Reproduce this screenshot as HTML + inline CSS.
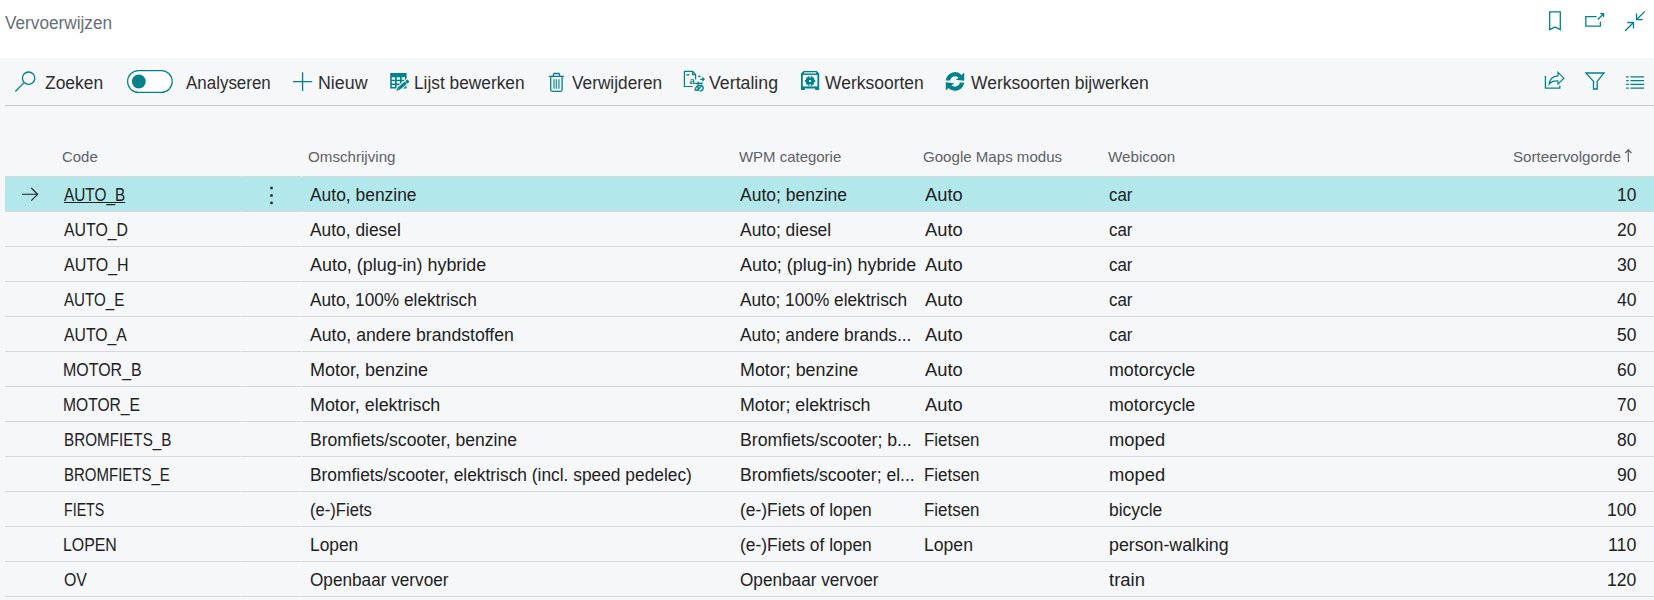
<!DOCTYPE html>
<html lang="nl">
<head>
<meta charset="utf-8">
<title>Vervoerwijzen</title>
<style>
html,body{margin:0;padding:0;}
body{width:1654px;height:600px;overflow:hidden;background:#fff;font-family:"Liberation Sans",sans-serif;color:#212121;position:relative;}
#gray{position:absolute;left:0;top:58px;width:1654px;height:542px;background:#f6f7f9;}
#tbline{position:absolute;left:5px;top:105px;width:1649px;height:1px;background:#c8c9cb;}
.t{position:absolute;white-space:nowrap;transform-origin:0 0;display:block;}
.title{font-size:17.5px;line-height:24px;color:#656e7b;}
.tb{font-size:17.5px;line-height:24px;color:#2e2e2e;}
.hd{font-size:15px;line-height:20px;color:#5e6167;}
.c{font-size:17.5px;line-height:24px;color:#212121;}
.rl{position:absolute;left:5px;width:1649px;height:1px;background:#d6d7d9;}
.rl i{position:absolute;top:0;width:1px;height:1px;background:#eceef0;}
#sel{position:absolute;left:5px;top:177px;width:1649px;height:34px;background:#b2e8eb;}
svg{position:absolute;overflow:visible;}
</style>
</head>
<body>
<div id="gray"></div>
<div id="tbline"></div>
<div id="sel"></div>
<div class="rl" style="top:176px"><i style="left:236px"></i><i style="left:296px"></i></div>
<div class="rl" style="top:211px"><i style="left:236px"></i><i style="left:296px"></i></div>
<div class="rl" style="top:246px"><i style="left:236px"></i><i style="left:296px"></i></div>
<div class="rl" style="top:281px"><i style="left:236px"></i><i style="left:296px"></i></div>
<div class="rl" style="top:316px"><i style="left:236px"></i><i style="left:296px"></i></div>
<div class="rl" style="top:351px"><i style="left:236px"></i><i style="left:296px"></i></div>
<div class="rl" style="top:386px"><i style="left:236px"></i><i style="left:296px"></i></div>
<div class="rl" style="top:421px"><i style="left:236px"></i><i style="left:296px"></i></div>
<div class="rl" style="top:456px"><i style="left:236px"></i><i style="left:296px"></i></div>
<div class="rl" style="top:491px"><i style="left:236px"></i><i style="left:296px"></i></div>
<div class="rl" style="top:526px"><i style="left:236px"></i><i style="left:296px"></i></div>
<div class="rl" style="top:561px"><i style="left:236px"></i><i style="left:296px"></i></div>
<div class="rl" style="top:596px"><i style="left:236px"></i><i style="left:296px"></i></div>
<div class="t title" id="t0" style="left:5.21px;top:11px;transform:scaleX(0.9825);">Vervoerwijzen</div>
<div class="t tb" id="t1" style="left:44.94px;top:71px;transform:scaleX(0.9956);">Zoeken</div>
<div class="t tb" id="t2" style="left:185.63px;top:71px;transform:scaleX(0.9684);">Analyseren</div>
<div class="t tb" id="t3" style="left:318.18px;top:71px;transform:scaleX(1.0178);">Nieuw</div>
<div class="t tb" id="t4" style="left:413.91px;top:71px;transform:scaleX(0.9883);">Lijst bewerken</div>
<div class="t tb" id="t5" style="left:571.78px;top:71px;transform:scaleX(0.9863);">Verwijderen</div>
<div class="t tb" id="t6" style="left:709.03px;top:71px;transform:scaleX(1.0138);">Vertaling</div>
<div class="t tb" id="t7" style="left:825.06px;top:71px;transform:scaleX(0.9993);">Werksoorten</div>
<div class="t tb" id="t8" style="left:971.00px;top:71px;">Werksoorten bijwerken</div>
<div class="t hd" id="t9" style="left:61.86px;top:147px;transform:scaleX(0.9960);">Code</div>
<div class="t hd" id="t10" style="left:308.07px;top:147px;transform:scaleX(1.0093);">Omschrijving</div>
<div class="t hd" id="t11" style="left:739.12px;top:147px;transform:scaleX(0.9967);">WPM categorie</div>
<div class="t hd" id="t12" style="left:922.77px;top:147px;transform:scaleX(1.0051);">Google Maps modus</div>
<div class="t hd" id="t13" style="left:1108.06px;top:147px;transform:scaleX(1.0121);">Webicoon</div>
<div class="t hd" id="t14" style="left:1513.16px;top:147px;transform:scaleX(1.0106);">Sorteervolgorde</div>
<div class="t c" id="t15" style="left:63.92px;top:183px;transform:scaleX(0.8781);text-decoration:underline;">AUTO_B</div>
<div class="t c" id="t16" style="left:310.09px;top:183px;transform:scaleX(0.9954);">Auto, benzine</div>
<div class="t c" id="t17" style="left:740.00px;top:183px;">Auto; benzine</div>
<div class="t c" id="t18" style="left:924.64px;top:183px;transform:scaleX(1.0457);">Auto</div>
<div class="t c" id="t19" style="left:1108.51px;top:183px;transform:scaleX(0.9659);">car</div>
<div class="t c" id="t20" style="left:1617.42px;top:183px;transform:scaleX(0.9919);">10</div>
<div class="t c" id="t21" style="left:63.89px;top:218px;transform:scaleX(0.9049);">AUTO_D</div>
<div class="t c" id="t22" style="left:310.09px;top:218px;transform:scaleX(0.9930);">Auto, diesel</div>
<div class="t c" id="t23" style="left:740.09px;top:218px;transform:scaleX(0.9974);">Auto; diesel</div>
<div class="t c" id="t24" style="left:924.61px;top:218px;transform:scaleX(1.0455);">Auto</div>
<div class="t c" id="t25" style="left:1108.79px;top:218px;transform:scaleX(0.9669);">car</div>
<div class="t c" id="t26" style="left:1617.24px;top:218px;transform:scaleX(0.9937);">20</div>
<div class="t c" id="t27" style="left:63.89px;top:253px;transform:scaleX(0.9145);">AUTO_H</div>
<div class="t c" id="t28" style="left:309.94px;top:253px;transform:scaleX(1.0236);">Auto, (plug-in) hybride</div>
<div class="t c" id="t29" style="left:739.94px;top:253px;transform:scaleX(1.0236);">Auto; (plug-in) hybride</div>
<div class="t c" id="t30" style="left:924.61px;top:253px;transform:scaleX(1.0455);">Auto</div>
<div class="t c" id="t31" style="left:1108.79px;top:253px;transform:scaleX(0.9669);">car</div>
<div class="t c" id="t32" style="left:1617.11px;top:253px;transform:scaleX(1.0070);">30</div>
<div class="t c" id="t33" style="left:63.89px;top:288px;transform:scaleX(0.8652);">AUTO_E</div>
<div class="t c" id="t34" style="left:309.82px;top:288px;transform:scaleX(0.9856);">Auto, 100% elektrisch</div>
<div class="t c" id="t35" style="left:740.08px;top:288px;transform:scaleX(0.9867);">Auto; 100% elektrisch</div>
<div class="t c" id="t36" style="left:924.61px;top:288px;transform:scaleX(1.0455);">Auto</div>
<div class="t c" id="t37" style="left:1108.79px;top:288px;transform:scaleX(0.9669);">car</div>
<div class="t c" id="t38" style="left:1616.57px;top:288px;transform:scaleX(1.0032);">40</div>
<div class="t c" id="t39" style="left:63.89px;top:323px;transform:scaleX(0.9002);">AUTO_A</div>
<div class="t c" id="t40" style="left:309.80px;top:323px;transform:scaleX(1.0091);">Auto, andere brandstoffen</div>
<div class="t c" id="t41" style="left:739.95px;top:323px;transform:scaleX(0.9898);">Auto; andere brands...</div>
<div class="t c" id="t42" style="left:924.61px;top:323px;transform:scaleX(1.0455);">Auto</div>
<div class="t c" id="t43" style="left:1108.79px;top:323px;transform:scaleX(0.9669);">car</div>
<div class="t c" id="t44" style="left:1617.24px;top:323px;transform:scaleX(0.9937);">50</div>
<div class="t c" id="t45" style="left:62.92px;top:358px;transform:scaleX(0.9124);">MOTOR_B</div>
<div class="t c" id="t46" style="left:309.64px;top:358px;transform:scaleX(1.0273);">Motor, benzine</div>
<div class="t c" id="t47" style="left:739.65px;top:358px;transform:scaleX(1.0218);">Motor; benzine</div>
<div class="t c" id="t48" style="left:924.61px;top:358px;transform:scaleX(1.0455);">Auto</div>
<div class="t c" id="t49" style="left:1109.00px;top:358px;transform:scaleX(1.0200);">motorcycle</div>
<div class="t c" id="t50" style="left:1617.20px;top:358px;transform:scaleX(0.9957);">60</div>
<div class="t c" id="t51" style="left:62.97px;top:393px;transform:scaleX(0.8920);">MOTOR_E</div>
<div class="t c" id="t52" style="left:309.64px;top:393px;transform:scaleX(1.0228);">Motor, elektrisch</div>
<div class="t c" id="t53" style="left:739.98px;top:393px;transform:scaleX(1.0162);">Motor; elektrisch</div>
<div class="t c" id="t54" style="left:924.61px;top:393px;transform:scaleX(1.0455);">Auto</div>
<div class="t c" id="t55" style="left:1109.00px;top:393px;transform:scaleX(1.0200);">motorcycle</div>
<div class="t c" id="t56" style="left:1617.23px;top:393px;transform:scaleX(0.9943);">70</div>
<div class="t c" id="t57" style="left:63.93px;top:428px;transform:scaleX(0.8700);">BROMFIETS_B</div>
<div class="t c" id="t58" style="left:309.67px;top:428px;transform:scaleX(1.0038);">Bromfiets/scooter, benzine</div>
<div class="t c" id="t59" style="left:739.99px;top:428px;transform:scaleX(1.0090);">Bromfiets/scooter; b...</div>
<div class="t c" id="t60" style="left:924.08px;top:428px;transform:scaleX(0.9665);">Fietsen</div>
<div class="t c" id="t61" style="left:1108.72px;top:428px;transform:scaleX(1.0480);">moped</div>
<div class="t c" id="t62" style="left:1617.32px;top:428px;transform:scaleX(0.9947);">80</div>
<div class="t c" id="t63" style="left:63.94px;top:463px;transform:scaleX(0.8573);">BROMFIETS_E</div>
<div class="t c" id="t64" style="left:309.61px;top:463px;transform:scaleX(0.9915);">Bromfiets/scooter, elektrisch (incl. speed pedelec)</div>
<div class="t c" id="t65" style="left:739.67px;top:463px;transform:scaleX(1.0035);">Bromfiets/scooter; el...</div>
<div class="t c" id="t66" style="left:924.08px;top:463px;transform:scaleX(0.9665);">Fietsen</div>
<div class="t c" id="t67" style="left:1108.72px;top:463px;transform:scaleX(1.0480);">moped</div>
<div class="t c" id="t68" style="left:1617.10px;top:463px;transform:scaleX(1.0077);">90</div>
<div class="t c" id="t69" style="left:64.08px;top:498px;transform:scaleX(0.8123);">FIETS</div>
<div class="t c" id="t70" style="left:309.98px;top:498px;transform:scaleX(0.9497);">(e-)Fiets</div>
<div class="t c" id="t71" style="left:739.57px;top:498px;transform:scaleX(0.9963);">(e-)Fiets of lopen</div>
<div class="t c" id="t72" style="left:924.08px;top:498px;transform:scaleX(0.9665);">Fietsen</div>
<div class="t c" id="t73" style="left:1109.12px;top:498px;transform:scaleX(0.9962);">bicycle</div>
<div class="t c" id="t74" style="left:1606.90px;top:498px;transform:scaleX(1.0042);">100</div>
<div class="t c" id="t75" style="left:63.35px;top:533px;transform:scaleX(0.9074);">LOPEN</div>
<div class="t c" id="t76" style="left:309.69px;top:533px;transform:scaleX(0.9918);">Lopen</div>
<div class="t c" id="t77" style="left:739.57px;top:533px;transform:scaleX(0.9963);">(e-)Fiets of lopen</div>
<div class="t c" id="t78" style="left:924.09px;top:533px;transform:scaleX(1.0054);">Lopen</div>
<div class="t c" id="t79" style="left:1109.08px;top:533px;transform:scaleX(1.0166);">person-walking</div>
<div class="t c" id="t80" style="left:1608.06px;top:533px;transform:scaleX(1.0144);">110</div>
<div class="t c" id="t81" style="left:63.80px;top:568px;transform:scaleX(0.9083);">OV</div>
<div class="t c" id="t82" style="left:309.93px;top:568px;transform:scaleX(0.9818);">Openbaar vervoer</div>
<div class="t c" id="t83" style="left:739.93px;top:568px;transform:scaleX(0.9818);">Openbaar vervoer</div>
<div class="t c" id="t84" style="left:1109.41px;top:568px;transform:scaleX(1.0550);">train</div>
<div class="t c" id="t85" style="left:1606.90px;top:568px;transform:scaleX(1.0042);">120</div>
<svg id="icons" width="1654" height="600" viewBox="0 0 1654 600" style="left:0;top:0" fill="none" stroke="#00828b" stroke-width="1.3">
<!-- top-right icons -->
<path d="M1549.7,11.8 H1560.3 V29.6 L1555,27 L1549.7,29.6 Z"/>
<path d="M1596.6,16.7 H1585.8 V26.1 H1600.4 V21.4"/>
<path d="M1597.8,19.5 L1603.6,13.7 M1600.2,13.7 H1603.6 V17.1"/>
<path d="M1644.8,11.4 L1636.5,19.7 M1636.5,13.6 V19.7 H1642.6"/>
<path d="M1625.2,30.8 L1633.5,22.5 M1627.3,22.5 H1633.5 V28.6"/>
<!-- search -->
<circle cx="28.6" cy="78.2" r="6.2"/>
<path d="M24.2,82.6 L15.3,91.5"/>
<!-- toggle -->
<rect x="127.6" y="70.6" width="44.6" height="21.8" rx="10.9" fill="#fff" stroke-width="1.2"/>
<circle cx="138.8" cy="81.5" r="6.9" fill="#00828b" stroke="none"/>
<!-- plus -->
<path d="M293,81.6 H312.2 M302.6,72.2 V91"/>
<!-- edit list -->
<g stroke="none">
<rect x="390.2" y="73" width="16.4" height="15.5" fill="#00828b"/>
<g fill="#fff">
<rect x="391.8" y="77.3" width="3.2" height="2.4"/><rect x="396.7" y="77.3" width="3.3" height="2.4"/><rect x="401.7" y="77.3" width="3.3" height="2.4"/>
<rect x="391.8" y="81.2" width="3.2" height="2.3"/><rect x="396.7" y="81.2" width="3.3" height="2.3"/><rect x="401.7" y="81.2" width="3.3" height="2.3"/>
<rect x="391.8" y="85.1" width="3.2" height="1.9"/><rect x="396.7" y="85.1" width="3.3" height="1.9"/><rect x="401.7" y="85.1" width="3.3" height="1.9"/>
</g>
<g transform="translate(396.2,90.7) rotate(-39.6)">
<path d="M-1.2,0 L3,-2.7 H17 V2.7 H3 Z" fill="#f6f7f9"/>
<path d="M0,0 L3.3,-1.55 V1.55 Z" fill="#00828b"/>
<rect x="3.3" y="-1.55" width="9.2" height="3.1" fill="#00828b"/>
<rect x="13" y="-1.55" width="2.9" height="3.1" rx="0.6" fill="#00828b"/>
</g>
</g>
<!-- trash -->
<path d="M548.8,76.3 H563.9 M553,76.3 L554,73.5 H559 L560,76.3 M550.7,76.3 V89.8 Q550.7,91.3 552.2,91.3 H560.6 Q562.1,91.3 562.1,89.8 V76.3"/>
<path d="M554,79.2 V88.7 M556.4,79.2 V88.7 M558.9,79.2 V88.7" stroke-width="1.4" opacity="0.8"/>
<!-- translate -->
<path d="M695.6,79.4 V74.4 L692.6,71.4 H684.4 V86.5 H692.7 M692.6,71.4 V74.6 H695.6 M686.2,74.9 H689.4" stroke-width="1.2"/>
<path d="M698.1,76.4 H700.6 M700.2,79.3 H704 M702.3,77.5 L704.1,79.3 L702.3,81.1" stroke-width="1.2"/>
<text x="689.4" y="84.4" font-family="Liberation Sans, sans-serif" font-size="9.5" font-weight="bold" fill="#00828b" stroke="none">a</text>
<text x="693.6" y="90.9" font-family="Noto Sans CJK JP, sans-serif" font-size="11" font-weight="bold" fill="#00828b" stroke="none">あ</text>
<!-- werksoorten -->
<g stroke="none">
<path d="M801,73.4 L803.5,70.9 H816.7 L819.2,73.4 V89.9 H815.2 V88.4 H804.8 V89.9 H801 Z" fill="#00828b"/>
<rect x="802.8" y="74.9" width="14.6" height="11.5" fill="#fbfcfc"/>
<rect x="804.1" y="72.3" width="12" height="1.2" fill="#f2f9f9"/>
<path d="M805.9,79.2 Q805.9,76.9 808.2,76.9 H812 Q814.3,76.9 814.3,79.2 V82.8 Q814.3,85.1 812,85.1 H808.2 Q805.9,85.1 805.9,82.8 Z" fill="#00828b"/>
<rect x="809.5" y="76" width="1.2" height="2" fill="#fbfcfc"/><rect x="809.5" y="84" width="1.2" height="2" fill="#fbfcfc"/>
<rect x="808.2" y="76.1" width="1.3" height="1.2" fill="#00828b"/><rect x="810.7" y="76.1" width="1.3" height="1.2" fill="#00828b"/>
<rect x="808.2" y="84.7" width="1.3" height="1.2" fill="#00828b"/><rect x="810.7" y="84.7" width="1.3" height="1.2" fill="#00828b"/>
<circle cx="805.6" cy="81" r="0.9" fill="#00828b"/><circle cx="814.6" cy="81" r="0.9" fill="#00828b"/>
<rect x="809.2" y="80.1" width="1.8" height="1.8" fill="#fff"/>
</g>
<!-- refresh -->
<g stroke="none" fill="#00828b">
<path id="rf" d="M945.8,80.4 A9.3,9.3 0 0 1 961.64,74.88 L964.2,72.4 V80.7 L955.6,79.7 L958.56,77.75 A5.1,5.1 0 0 0 950,80.4 Z"/>
<path d="M945.8,80.4 A9.3,9.3 0 0 1 961.64,74.88 L964.2,72.4 V80.7 L955.6,79.7 L958.56,77.75 A5.1,5.1 0 0 0 950,80.4 Z" transform="rotate(180 955 81.45)"/>
</g>
<!-- share -->
<path d="M1545.4,75.9 V88.1 H1559.8 V85.4" stroke-width="1.3"/>
<path d="M1558,72.3 L1563.9,78.2 L1558,84.1 V81 Q1552,80.6 1549.2,84.2 Q1549.8,76.5 1558,75.8 Z" stroke-width="1.2"/>
<!-- filter -->
<path d="M1585.9,73 H1604 L1597.2,81.4 V89 H1593.5 V81.4 Z" stroke-width="1.3"/>
<!-- list -->
<path d="M1626.1,76.9 H1628.7 M1630.4,76.9 H1644.1 M1626.1,80.6 H1628.7 M1630.4,80.6 H1644.1 M1626.1,84.4 H1628.7 M1630.4,84.4 H1644.1 M1626.1,88.1 H1628.7 M1630.4,88.1 H1644.1" stroke-width="1.25"/>
<!-- sort arrow -->
<path d="M1628.3,149.8 V161.9 M1625.2,153 L1628.3,149.8 L1631.4,153" stroke="#555" stroke-width="1.1"/>
<!-- row arrow -->
<path d="M22,194.3 H37.6 M31.3,188 L37.6,194.3 L31.3,200.6" stroke="#212121" stroke-width="1.1"/>
<g fill="#212121" stroke="none"><rect x="270.3" y="186.8" width="2.4" height="2.4"/><rect x="270.3" y="194.3" width="2.4" height="2.4"/><rect x="270.3" y="201.7" width="2.4" height="2.4"/></g>
</svg>

</body>
</html>
